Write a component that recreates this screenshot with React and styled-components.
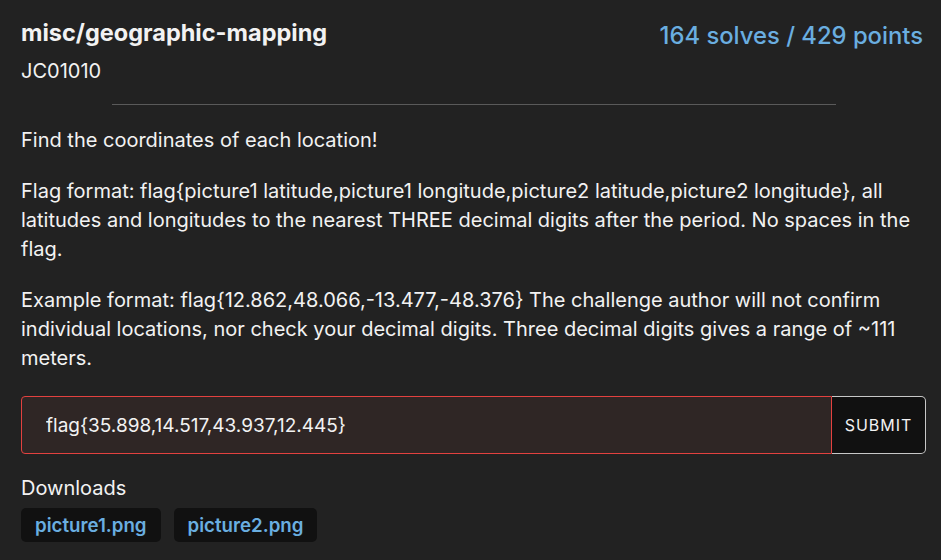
import React from "react";
import styled, { createGlobalStyle } from "styled-components";

const colors = {
  bg: "#222222",
  text: "#f2f2f2",
  link: "#6aaee0",
  divider: "#5a5a5a",
  inputBg: "#2f2625",
  danger: "#e3413f",
  dark: "#111111",
};

const paragraphs = [
  "Find the coordinates of each location!",
  "Flag format: flag{picture1 latitude,picture1 longitude,picture2 latitude,picture2 longitude}, all latitudes and longitudes to the nearest THREE decimal digits after the period. No spaces in the flag.",
  "Example format: flag{12.862,48.066,-13.477,-48.376} The challenge author will not confirm individual locations, nor check your decimal digits. Three decimal digits gives a range of ~111 meters.",
];

const GlobalStyle = createGlobalStyle`
  html, body {
    margin: 0;
    background: ${colors.bg};
  }
  body {
    font-family: Inter, "Noto Sans", "Liberation Sans", sans-serif;
    color: ${colors.text};
  }
`;

function App() {
  const [flag, setFlag] = React.useState("flag{35.898,14.517,43.937,12.445}");

  return (
    <>
      <GlobalStyle />
      <Wrapper>
        <Header>
          <div>
            <Title>misc/geographic-mapping</Title>
            <Author>JC01010</Author>
          </div>
          <Stats>164 solves / 429 points</Stats>
        </Header>

        <Divider />

        <Description>
          {paragraphs.map((text) => (
            <p key={text}>{text}</p>
          ))}
        </Description>

        <FlagForm onSubmit={(e) => e.preventDefault()}>
          <FlagInput value={flag} onChange={(e) => setFlag(e.target.value)} />
          <SubmitButton type="submit">Submit</SubmitButton>
        </FlagForm>

        <Caption>Downloads</Caption>
        <Files>
          <FileChip href="#">picture1.png</FileChip>
          <FileChip href="#">picture2.png</FileChip>
        </Files>
      </Wrapper>
    </>
  );
}

const Wrapper = styled.div`
  display: flex;
  flex-direction: column;
  padding: 18px 15px 0 21px;
`;

const Header = styled.div`
  display: flex;
  justify-content: space-between;
  align-items: flex-start;
`;

const Title = styled.div`
  font-size: 23.5px;
  font-weight: 700;
  line-height: 30px;
`;

const Author = styled.div`
  font-size: 20px;
  line-height: 26px;
  margin-top: 10px;
`;

const Stats = styled.div`
  font-size: 23.8px;
  font-weight: 500;
  color: ${colors.link};
  line-height: 30px;
  margin-top: 3px;
  margin-right: 3px;
`;

const Divider = styled.hr`
  width: 80%;
  border: none;
  border-top: 1px solid ${colors.divider};
  margin: 20px auto 21px;
`;

const Description = styled.div`
  font-size: 20px;
  line-height: 29px;

  p {
    margin: 0 0 22px;
  }
`;

const FlagForm = styled.form`
  display: flex;
  margin-top: 1px;
  height: 58px;
`;

const FlagInput = styled.input`
  flex: 1;
  min-width: 0;
  box-sizing: border-box;
  background: ${colors.inputBg};
  border: 1px solid ${colors.danger};
  border-radius: 4px 0 0 4px;
  color: ${colors.text};
  font-family: inherit;
  font-size: 19px;
  padding: 0 24px;
  outline: none;
`;

const SubmitButton = styled.button`
  box-sizing: border-box;
  width: 94px;
  background: ${colors.dark};
  color: ${colors.text};
  border: 1px solid #c8c8c8;
  border-left: none;
  border-radius: 0 5px 5px 0;
  font-family: inherit;
  font-size: 16px;
  letter-spacing: 1px;
  text-transform: uppercase;
  cursor: pointer;
`;

const Caption = styled.div`
  font-size: 20px;
  line-height: 26px;
  margin-top: 21px;
`;

const Files = styled.div`
  display: flex;
  gap: 13px;
  margin-top: 7px;
`;

const FileChip = styled.a`
  display: inline-flex;
  align-items: center;
  height: 34px;
  padding: 0 14px;
  background: ${colors.dark};
  border-radius: 5px;
  color: ${colors.link};
  font-size: 18.7px;
  font-weight: 600;
  text-decoration: none;
`;

export default App;
